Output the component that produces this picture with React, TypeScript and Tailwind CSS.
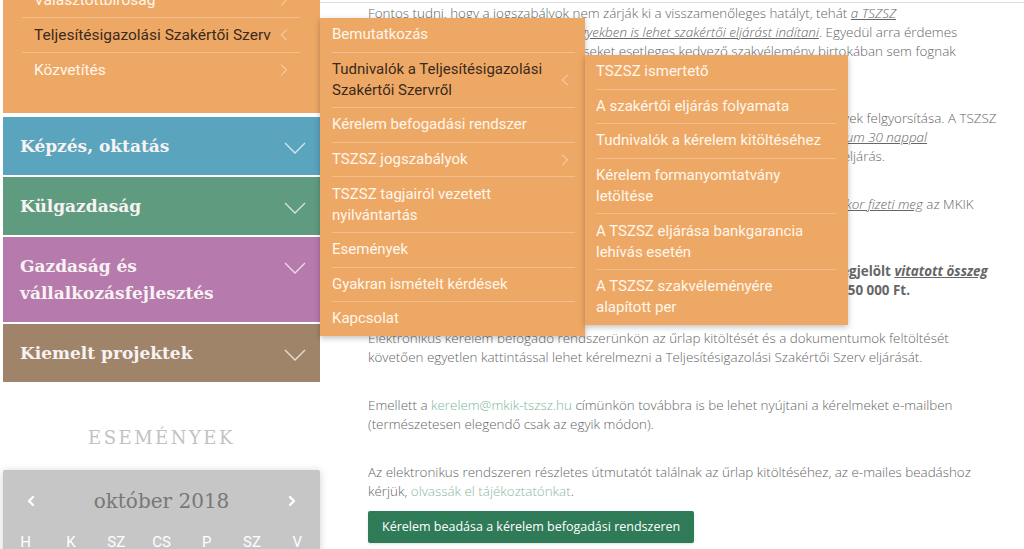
import { ChevronLeft, ChevronRight } from 'lucide-react';
import type { ReactNode } from 'react';

type MenuItem = { label: ReactNode; active?: boolean; chevron?: 'left' | 'right' };

const mainMenu: MenuItem[] = [
  { label: 'Bemutatkozás' },
  { label: <>Tudnivalók a Teljesítésigazolási<br />Szakértői Szervről</>, active: true, chevron: 'left' },
  { label: 'Kérelem befogadási rendszer' },
  { label: 'TSZSZ jogszabályok', chevron: 'right' },
  { label: <>TSZSZ tagjairól vezetett<br />nyilvántartás</> },
  { label: 'Események' },
  { label: 'Gyakran ismételt kérdések' },
  { label: 'Kapcsolat' },
];

const subMenu: MenuItem[] = [
  { label: 'TSZSZ ismertető' },
  { label: 'A szakértői eljárás folyamata' },
  { label: 'Tudnivalók a kérelem kitöltéséhez' },
  { label: <>Kérelem formanyomtatvány<br />letöltése</> },
  { label: <>A TSZSZ eljárása bankgarancia<br />lehívás esetén</> },
  { label: <>A TSZSZ szakvéleményére<br />alapított per</> },
];

const sections = [
  { title: 'Képzés, oktatás', bg: 'bg-[#5ba4be]' },
  { title: 'Külgazdaság', bg: 'bg-[#5f9b7f]' },
  { title: <>Gazdaság és<br />vállalkozásfejlesztés</>, bg: 'bg-[#b77aad]' },
  { title: 'Kiemelt projektek', bg: 'bg-[#a0846a]' },
];

function Chevron({ dir }: { dir?: 'left' | 'right' }) {
  if (!dir) return null;
  const Icon = dir === 'left' ? ChevronLeft : ChevronRight;
  return <Icon size={20} strokeWidth={1.1} className="shrink-0 text-white/70" />;
}

function DownChevron() {
  return (
    <svg width="22" height="12" viewBox="0 0 22 12" fill="none" className="shrink-0">
      <polyline points="1,1 11,11 21,1" stroke="rgba(255,255,255,0.75)" strokeWidth="1.3" />
    </svg>
  );
}

function Dropdown({ items, className }: { items: MenuItem[]; className: string }) {
  return (
    <div className={`absolute z-10 bg-[#eea865] shadow-[0_2px_6px_rgba(0,0,0,0.25)] font-['Roboto',sans-serif] text-[15px] ${className}`}>
      {items.map((it, i) => (
        <div
          key={i}
          className={`flex items-center justify-between py-[6.3px] leading-[21px] ${i ? 'border-t border-[#f4bd89]' : ''} ${it.active ? 'text-[#3b2a1c]' : 'text-[#fff6ec]'}`}
        >
          <span>{it.label}</span>
          <Chevron dir={it.chevron} />
        </div>
      ))}
    </div>
  );
}

function Sidebar() {
  return (
    <aside className="w-[317px] ml-[3px] shrink-0">
      <div className="bg-[#eea865] -mt-[17px] pb-[26px] font-['Roboto',sans-serif] text-[15.5px]">
        <ul className="ml-[19px] mr-[20px]">
          <li className="flex items-center justify-between pl-3 pr-[6px] py-[7px] leading-[20px] text-[#fff6ec]">
            Választottbíróság <Chevron dir="right" />
          </li>
          <li className="flex items-center justify-between pl-3 pr-[6px] py-[7px] leading-[20px] border-t border-[#f4bd89] text-[#3b2a1c]">
            Teljesítésigazolási Szakértői Szerv <Chevron dir="left" />
          </li>
          <li className="flex items-center justify-between pl-3 pr-[6px] py-[7px] leading-[20px] border-t border-[#f4bd89] text-[#fff6ec]">
            Közvetítés <Chevron dir="right" />
          </li>
        </ul>
      </div>

      <div className="mt-[4px] flex flex-col gap-[2px]">
        {sections.map((s, i) => (
          <div key={i} className={`${s.bg} flex items-start justify-between pl-[17px] pr-[14px] py-[15.5px]`}>
            <span className="font-['DejaVu_Serif',serif] font-bold text-[17px] leading-[27px] text-[#f7f3f3]">{s.title}</span>
            <span className="pt-[9px]"><DownChevron /></span>
          </div>
        ))}
      </div>

      <h3 className="mt-[44px] text-center font-['DejaVu_Serif',serif] text-[18px] leading-[24px] tracking-[2.5px] text-[#c2c2c2]">
        ESEMÉNYEK
      </h3>

      <div className="mt-[20px] bg-[#c6c6c6] rounded-[2px] shadow-[0_1px_8px_rgba(0,0,0,0.18)] pb-4">
        <div className="flex items-center justify-between px-[20px] pt-[17px]">
          <ChevronLeft size={16} strokeWidth={3.5} className="text-white" />
          <span className="font-['DejaVu_Serif',serif] text-[20px] leading-[28px] text-[#787878]">október 2018</span>
          <ChevronRight size={16} strokeWidth={3.5} className="text-white" />
        </div>
        <div className="grid grid-cols-7 mt-[16px] text-center font-['Roboto',sans-serif] text-[15px] text-white">
          {['H', 'K', 'SZ', 'CS', 'P', 'SZ', 'V'].map((d, i) => (
            <span key={i}>{d}</span>
          ))}
        </div>
      </div>
    </aside>
  );
}

const link = 'italic underline';

function Content() {
  return (
    <main className="flex-1 mt-[2px] border-t border-[#dedede] pl-[48px] pt-px font-['Open_Sans',sans-serif] font-light text-[13.4px] leading-[19px] text-[#666] whitespace-nowrap">
      <p className="mb-[29px]">
        Fontos tudni, hogy a jogszabályok nem zárják ki a visszamenőleges hatályt, tehát <span className={link}>a TSZSZ</span>
        <br />
        <span className={link}>megalakulása előtt már keletkezett ügyekben is lehet szakértői eljárást indítani</span>. Egyedül arra érdemes
        <br />
        figyelni, hogy a felek elévült követeléseket esetleges kedvező szakvélemény birtokában sem fognak
        <br />
        tudni érvényesíteni.
      </p>
      <p className="mb-[29px]">
        A kérelmezők számára a szakértői eljárás egyik legfőbb előnye a fizetési vitás ügyek felgyorsítása. A TSZSZ
        <br />
        szakvéleményt a teljes kérelem és a szakértői díj beérkezésétől számított <span className={link}>maximum 30 nappal</span>
        <br />
        korábban kiadja, így a bírósági peres eljárásnál jóval gyorsabban lezárul a teljes eljárás.
      </p>
      <p className="mb-[29px]">
        A szakértői eljárás díját a kérelmező teljes összegében már <span className={link}>a kérelem benyújtásakor fizeti meg</span> az MKIK
        <br />
        Teljesítésigazolási Szakértői Szerv számlájára.
      </p>
      <p className="mb-[29px] font-bold">
        A szakértői eljárás díja, amennyiben a kérelmező által a kérelmében megjelölt <span className={link}>vitatott összeg</span>
        <br />
        nem haladja meg a 10 000 000,- forintot, akkor a díja egységesen nettó 450 000 Ft.
      </p>
      <p className="mb-[29px]">
        Elektronikus kérelem befogadó rendszerünkön az űrlap kitöltését és a dokumentumok feltöltését
        <br />
        követően egyetlen kattintással lehet kérelmezni a Teljesítésigazolási Szakértői Szerv eljárását.
      </p>
      <p className="mb-[29px]">
        Emellett a <a className="text-[#7cb898]">kerelem@mkik-tszsz.hu</a> címünkön továbbra is be lehet nyújtani a kérelmeket e-mailben
        <br />
        (természetesen elegendő csak az egyik módon).
      </p>
      <p className="mb-[10px]">
        Az elektronikus rendszeren részletes útmutatót találnak az űrlap kitöltéséhez, az e-mailes beadáshoz
        <br />
        kérjük, <a className="text-[#8db8a2]">olvassák el tájékoztatónkat</a>.
      </p>
      <button className="bg-[#2f7b58] text-white font-normal text-[12.5px] leading-[18px] px-[14px] py-[7px] rounded-[2px] shadow-sm">
        Kérelem beadása a kérelem befogadási rendszeren
      </button>
    </main>
  );
}

export default function App() {
  return (
    <div className="relative h-screen overflow-hidden bg-white">
      <div className="flex">
        <Sidebar />
        <Content />
      </div>
      <Dropdown items={mainMenu} className="left-[320px] top-[18px] w-[265px] pl-3 pr-[10px]" />
      <Dropdown items={subMenu} className="left-[585px] top-[55px] w-[263px] pl-[11px] pr-3" />
    </div>
  );
}
